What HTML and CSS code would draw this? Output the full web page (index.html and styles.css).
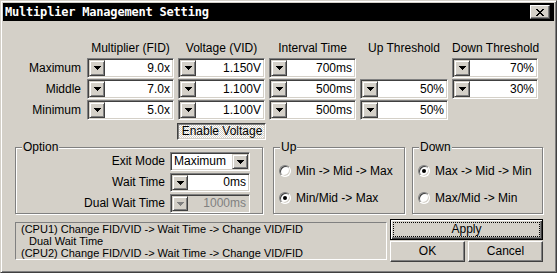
FILE: index.html
```html
<!DOCTYPE html>
<html lang="en">
<head>
    <meta charset="UTF-8">
    <title>Multiplier Management Setting</title>
    <link rel="stylesheet" href="styles.css">
</head>
<body>
<div class="dialog">
    <div class="titlebar">
        <span class="title">Multiplier Management Setting</span>
        <span class="close">
            <svg width="8" height="7" viewBox="0 0 8 7" shape-rendering="crispEdges"><path d="M0 0h2v1h-2zM6 0h2v1h-2zM1 1h2v1h-2zM5 1h2v1h-2zM2 2h4v1h-4zM3 3h2v1h-2zM2 4h4v1h-4zM1 5h2v1h-2zM5 5h2v1h-2zM0 6h2v1h-2zM6 6h2v1h-2z"/></svg>
        </span>
    </div>

    <div class="grid">
        <div></div>
        <div class="head">Multiplier (FID)</div>
        <div class="head">Voltage (VID)</div>
        <div class="head">Interval Time</div>
        <div class="head">Up Threshold</div>
        <div class="head">Down Threshold</div>

        <div class="label">Maximum</div>
        <div class="spin"><span class="btn"><svg class="arrow" width="7" height="4" viewBox="0 0 7 4"><path d="M0 0h7v1h-1v1h-1v1h-1v1h-1v-1h-1v-1h-1v-1h-1z"/></svg></span><span class="field">9.0x</span></div>
        <div class="spin"><span class="btn"><svg class="arrow" width="7" height="4" viewBox="0 0 7 4"><path d="M0 0h7v1h-1v1h-1v1h-1v1h-1v-1h-1v-1h-1v-1h-1z"/></svg></span><span class="field">1.150V</span></div>
        <div class="spin"><span class="btn"><svg class="arrow" width="7" height="4" viewBox="0 0 7 4"><path d="M0 0h7v1h-1v1h-1v1h-1v1h-1v-1h-1v-1h-1v-1h-1z"/></svg></span><span class="field">700ms</span></div>
        <div></div>
        <div class="spin"><span class="btn"><svg class="arrow" width="7" height="4" viewBox="0 0 7 4"><path d="M0 0h7v1h-1v1h-1v1h-1v1h-1v-1h-1v-1h-1v-1h-1z"/></svg></span><span class="field">70%</span></div>

        <div class="label">Middle</div>
        <div class="spin"><span class="btn"><svg class="arrow" width="7" height="4" viewBox="0 0 7 4"><path d="M0 0h7v1h-1v1h-1v1h-1v1h-1v-1h-1v-1h-1v-1h-1z"/></svg></span><span class="field">7.0x</span></div>
        <div class="spin"><span class="btn"><svg class="arrow" width="7" height="4" viewBox="0 0 7 4"><path d="M0 0h7v1h-1v1h-1v1h-1v1h-1v-1h-1v-1h-1v-1h-1z"/></svg></span><span class="field">1.100V</span></div>
        <div class="spin"><span class="btn"><svg class="arrow" width="7" height="4" viewBox="0 0 7 4"><path d="M0 0h7v1h-1v1h-1v1h-1v1h-1v-1h-1v-1h-1v-1h-1z"/></svg></span><span class="field">500ms</span></div>
        <div class="spin"><span class="btn"><svg class="arrow" width="7" height="4" viewBox="0 0 7 4"><path d="M0 0h7v1h-1v1h-1v1h-1v1h-1v-1h-1v-1h-1v-1h-1z"/></svg></span><span class="field">50%</span></div>
        <div class="spin"><span class="btn"><svg class="arrow" width="7" height="4" viewBox="0 0 7 4"><path d="M0 0h7v1h-1v1h-1v1h-1v1h-1v-1h-1v-1h-1v-1h-1z"/></svg></span><span class="field">30%</span></div>

        <div class="label">Minimum</div>
        <div class="spin"><span class="btn"><svg class="arrow" width="7" height="4" viewBox="0 0 7 4"><path d="M0 0h7v1h-1v1h-1v1h-1v1h-1v-1h-1v-1h-1v-1h-1z"/></svg></span><span class="field">5.0x</span></div>
        <div class="spin"><span class="btn"><svg class="arrow" width="7" height="4" viewBox="0 0 7 4"><path d="M0 0h7v1h-1v1h-1v1h-1v1h-1v-1h-1v-1h-1v-1h-1z"/></svg></span><span class="field">1.100V</span></div>
        <div class="spin"><span class="btn"><svg class="arrow" width="7" height="4" viewBox="0 0 7 4"><path d="M0 0h7v1h-1v1h-1v1h-1v1h-1v-1h-1v-1h-1v-1h-1z"/></svg></span><span class="field">500ms</span></div>
        <div class="spin"><span class="btn"><svg class="arrow" width="7" height="4" viewBox="0 0 7 4"><path d="M0 0h7v1h-1v1h-1v1h-1v1h-1v-1h-1v-1h-1v-1h-1z"/></svg></span><span class="field">50%</span></div>
        <div></div>

        <div class="toggle">Enable Voltage</div>
    </div>

    <div class="lower">
        <div class="group option">
            <span class="legend">Option</span>
            <div class="label-r">Exit Mode</div>
            <div class="combo"><span class="value">Maximum</span><span class="btn"><svg class="arrow" width="7" height="4" viewBox="0 0 7 4"><path d="M0 0h7v1h-1v1h-1v1h-1v1h-1v-1h-1v-1h-1v-1h-1z"/></svg></span></div>
            <div class="label-r">Wait Time</div>
            <div class="spin"><span class="btn"><svg class="arrow" width="7" height="4" viewBox="0 0 7 4"><path d="M0 0h7v1h-1v1h-1v1h-1v1h-1v-1h-1v-1h-1v-1h-1z"/></svg></span><span class="field">0ms</span></div>
            <div class="label-r">Dual Wait Time</div>
            <div class="spin off"><span class="btn"><svg class="arrow" width="7" height="4" viewBox="0 0 7 4"><path d="M0 0h7v1h-1v1h-1v1h-1v1h-1v-1h-1v-1h-1v-1h-1z"/></svg></span><span class="field">1000ms</span></div>
        </div>
        <div class="group radios up">
            <span class="legend">Up</span>
            <div class="radio-row"><span class="radio"></span>Min -&gt; Mid -&gt; Max</div>
            <div class="radio-row"><span class="radio on"></span>Min/Mid -&gt; Max</div>
        </div>
        <div class="group radios down">
            <span class="legend">Down</span>
            <div class="radio-row"><span class="radio on"></span>Max -&gt; Mid -&gt; Min</div>
            <div class="radio-row"><span class="radio"></span>Max/Mid -&gt; Min</div>
        </div>
    </div>

    <div class="bottom">
        <div class="info">
            <div>(CPU1) Change FID/VID -&gt; Wait Time -&gt; Change VID/FID</div>
            <div class="indent">Dual Wait Time</div>
            <div>(CPU2) Change FID/VID -&gt; Wait Time -&gt; Change VID/FID</div>
        </div>
        <div class="buttons">
            <div class="button default">Apply</div>
            <div class="button-row">
                <div class="button">OK</div>
                <div class="button">Cancel</div>
            </div>
        </div>
    </div>
</div>
</body>
</html>
```

FILE: styles.css
```css
body {
    margin: 0;
    font-family: "Liberation Sans", Arial, sans-serif;
    font-size: 12px;
    color: #000;
}
.dialog {
    width: 557px;
    height: 273px;
    box-sizing: border-box;
    background: #d4d0c8;
    border: 1px solid;
    border-color: #d4d0c8 #404040 #404040 #d4d0c8;
    box-shadow: inset 1px 1px #fff, inset -1px -1px #808080;
    padding: 2px;
}
.titlebar {
    height: 18px;
    background: #000;
    color: #fff;
    display: flex;
    align-items: center;
    justify-content: space-between;
    padding: 0 4px 0 2px;
}
.title {
    font-family: "DejaVu Sans Mono", monospace;
    font-weight: bold;
    font-size: 12px;
    letter-spacing: -0.2px;
}
.close {
    width: 20px;
    height: 14px;
    box-sizing: border-box;
    background: #d4d0c8;
    border: 1px solid;
    border-color: #fff #404040 #404040 #fff;
    box-shadow: inset -1px -1px #808080;
    display: flex;
    align-items: center;
    justify-content: center;
}
.close svg {
    fill: #000;
}

/* top table */
.grid {
    display: grid;
    grid-template-columns: 80px 87px 87px 87px 88px 86px;
    grid-template-rows: 17px 20px 20px 20px 19px;
    column-gap: 4px;
    row-gap: 1px;
    margin-top: 19px;
}
.head {
    text-align: center;
    line-height: 17px;
    white-space: nowrap;
}
.label {
    text-align: right;
    padding-right: 2px;
    line-height: 20px;
}
.spin, .combo {
    display: flex;
    box-sizing: border-box;
    height: 20px;
    border: 1px solid;
    border-color: #808080 #fff #fff #808080;
    box-shadow: inset 1px 1px #404040, inset -1px -1px #d4d0c8;
    padding: 1px;
}
.btn {
    width: 16px;
    flex: none;
    box-sizing: border-box;
    background: #d4d0c8;
    border: 1px solid;
    border-color: #d4d0c8 #404040 #404040 #d4d0c8;
    box-shadow: inset 1px 1px #fff, inset -1px -1px #808080;
    display: flex;
    align-items: center;
    justify-content: center;
}
.arrow {
    fill: #000;
    display: block;
}
.field {
    flex: 1;
    background: #fff;
    text-align: right;
    padding-right: 2px;
    line-height: 16px;
    white-space: nowrap;
}
.spin.off .field {
    background: #d4d0c8;
    color: #808080;
}
.spin.off .arrow {
    fill: #808080;
}
.toggle {
    grid-column: 3;
    width: 89px;
    height: 17px;
    margin: 2px 0 0 -1px;
    box-sizing: border-box;
    border: 1px solid;
    border-color: #404040 #fff #fff #404040;
    box-shadow: inset 1px 1px #808080, inset -1px -1px #d4d0c8;
    background: repeating-conic-gradient(#fff 0 25%, #d4d0c8 0 50%) 0 0 / 2px 2px;
    text-align: center;
    line-height: 15px;
    padding-left: 1px;
}

/* group boxes */
.lower {
    display: flex;
    margin-top: 7px;
    padding-left: 12px;
}
.group {
    position: relative;
    box-sizing: border-box;
    height: 67px;
    border: 1px solid #808080;
    box-shadow: inset 1px 1px #fff, 1px 1px #fff;
}
.legend {
    position: absolute;
    top: -8px;
    left: 6px;
    padding: 0 1px;
    background: #d4d0c8;
    line-height: 14px;
}
.option {
    width: 248px;
    display: grid;
    grid-template-columns: 1fr 80px;
    grid-auto-rows: 19px;
    column-gap: 5px;
    row-gap: 2px;
    padding: 4px 12px 0 0;
}
.label-r {
    text-align: right;
    line-height: 19px;
    white-space: nowrap;
}
.option .spin, .option .combo {
    height: 19px;
}
.option .field {
    line-height: 15px;
}
.combo {
    background: #fff;
}
.combo .value {
    flex: 1;
    padding-left: 2px;
    line-height: 15px;
}
.radios {
    display: flex;
    flex-direction: column;
    gap: 14px;
    padding: 16px 0 0 5px;
}
.up {
    width: 132px;
    margin-left: 10px;
}
.down {
    width: 131px;
    margin-left: 7px;
}
.radio-row {
    display: flex;
    align-items: center;
    gap: 5px;
    height: 13px;
    white-space: nowrap;
}
.radio {
    position: relative;
    width: 12px;
    height: 12px;
    box-sizing: border-box;
    border-radius: 50%;
    background: #fff;
    border: 1px solid;
    border-color: #808080 #fff #fff #808080;
    box-shadow: inset 1px 1px #404040, inset -1px -1px #d4d0c8;
}
.radio.on::after {
    content: "";
    position: absolute;
    left: 3px;
    top: 3px;
    width: 4px;
    height: 4px;
    border-radius: 50%;
    background: #000;
}

/* bottom */
.bottom {
    display: flex;
    margin-top: 5px;
    padding-left: 12px;
}
.info {
    width: 372px;
    height: 38px;
    margin-top: 3px;
    box-sizing: border-box;
    border: 1px solid;
    border-color: #808080 #fff #fff #808080;
    padding-left: 5px;
    font-size: 11px;
    line-height: 12px;
    white-space: nowrap;
}
.indent {
    padding-left: 8px;
}
.buttons {
    width: 153px;
    margin-left: 3px;
}
.button {
    position: relative;
    box-sizing: border-box;
    height: 21px;
    background: #d4d0c8;
    border: 1px solid;
    border-color: #fff #404040 #404040 #fff;
    box-shadow: inset -1px -1px #808080;
    text-align: center;
    line-height: 19px;
}
.button.default {
    border: 1px solid #000;
    box-shadow: inset 1px 1px #fff, inset -1px -1px #404040, inset -2px -2px #808080;
}
.button.default::after {
    content: "";
    position: absolute;
    inset: 2px;
    border: 1px dotted #000;
}
.button-row {
    display: flex;
    gap: 3px;
    margin-top: 1px;
}
.button-row .button {
    width: 75px;
}
```
